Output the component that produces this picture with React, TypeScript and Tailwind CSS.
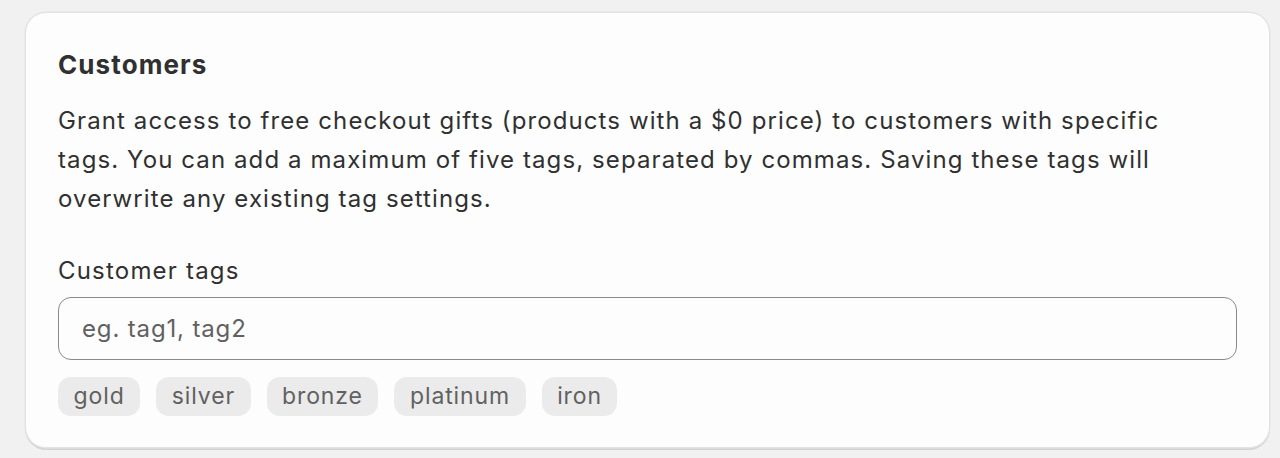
import React from "react";

export default function App() {
  const tags = ["gold", "silver", "bronze", "platinum", "iron"];
  return (
    <div
      className="min-h-[458px] w-[1280px] bg-[#f1f1f1] pl-[26px] pr-[11px] pt-[13px] pb-[11px] text-[#303030]"
      style={{ fontFamily: "Inter, 'Noto Sans', sans-serif" }}
    >
      <div className="rounded-[20px] bg-[#fdfdfd] px-[32px] pt-[32px] pb-[31px] shadow-[0_0_0_1.5px_#e3e3e3,0_2px_0_1px_#d4d4d4]">
        <h2 className="text-[26px] font-bold leading-[39px] tracking-[1.1px]">Customers</h2>
        <p className="mt-[17px] pr-[30px] text-[24px] leading-[39px] tracking-[1.1px]">
          Grant access to free checkout gifts (products with a $0 price) to customers with specific tags. You can add a maximum of five tags, separated by commas. Saving these tags will overwrite any existing tag settings.
        </p>
        <div className="mt-[33px] text-[24px] leading-[39px] tracking-[1.2px]">Customer tags</div>
        <div className="mt-[7px] flex h-[63px] items-center rounded-[13px] border border-[#8a8a8a] bg-[#fdfdfd] px-[23px]">
          <span className="text-[24px] tracking-[0.85px] text-[#616161]">eg. tag1, tag2</span>
        </div>
        <div className="mt-[17px] flex gap-[16px]">
          {tags.map((t) => (
            <span
              key={t}
              className="flex h-[39px] items-center rounded-[13px] bg-[#ebebeb] px-[15.5px] text-[23px] tracking-[0.9px] text-[#616161]"
            >
              {t}
            </span>
          ))}
        </div>
      </div>
    </div>
  );
}
